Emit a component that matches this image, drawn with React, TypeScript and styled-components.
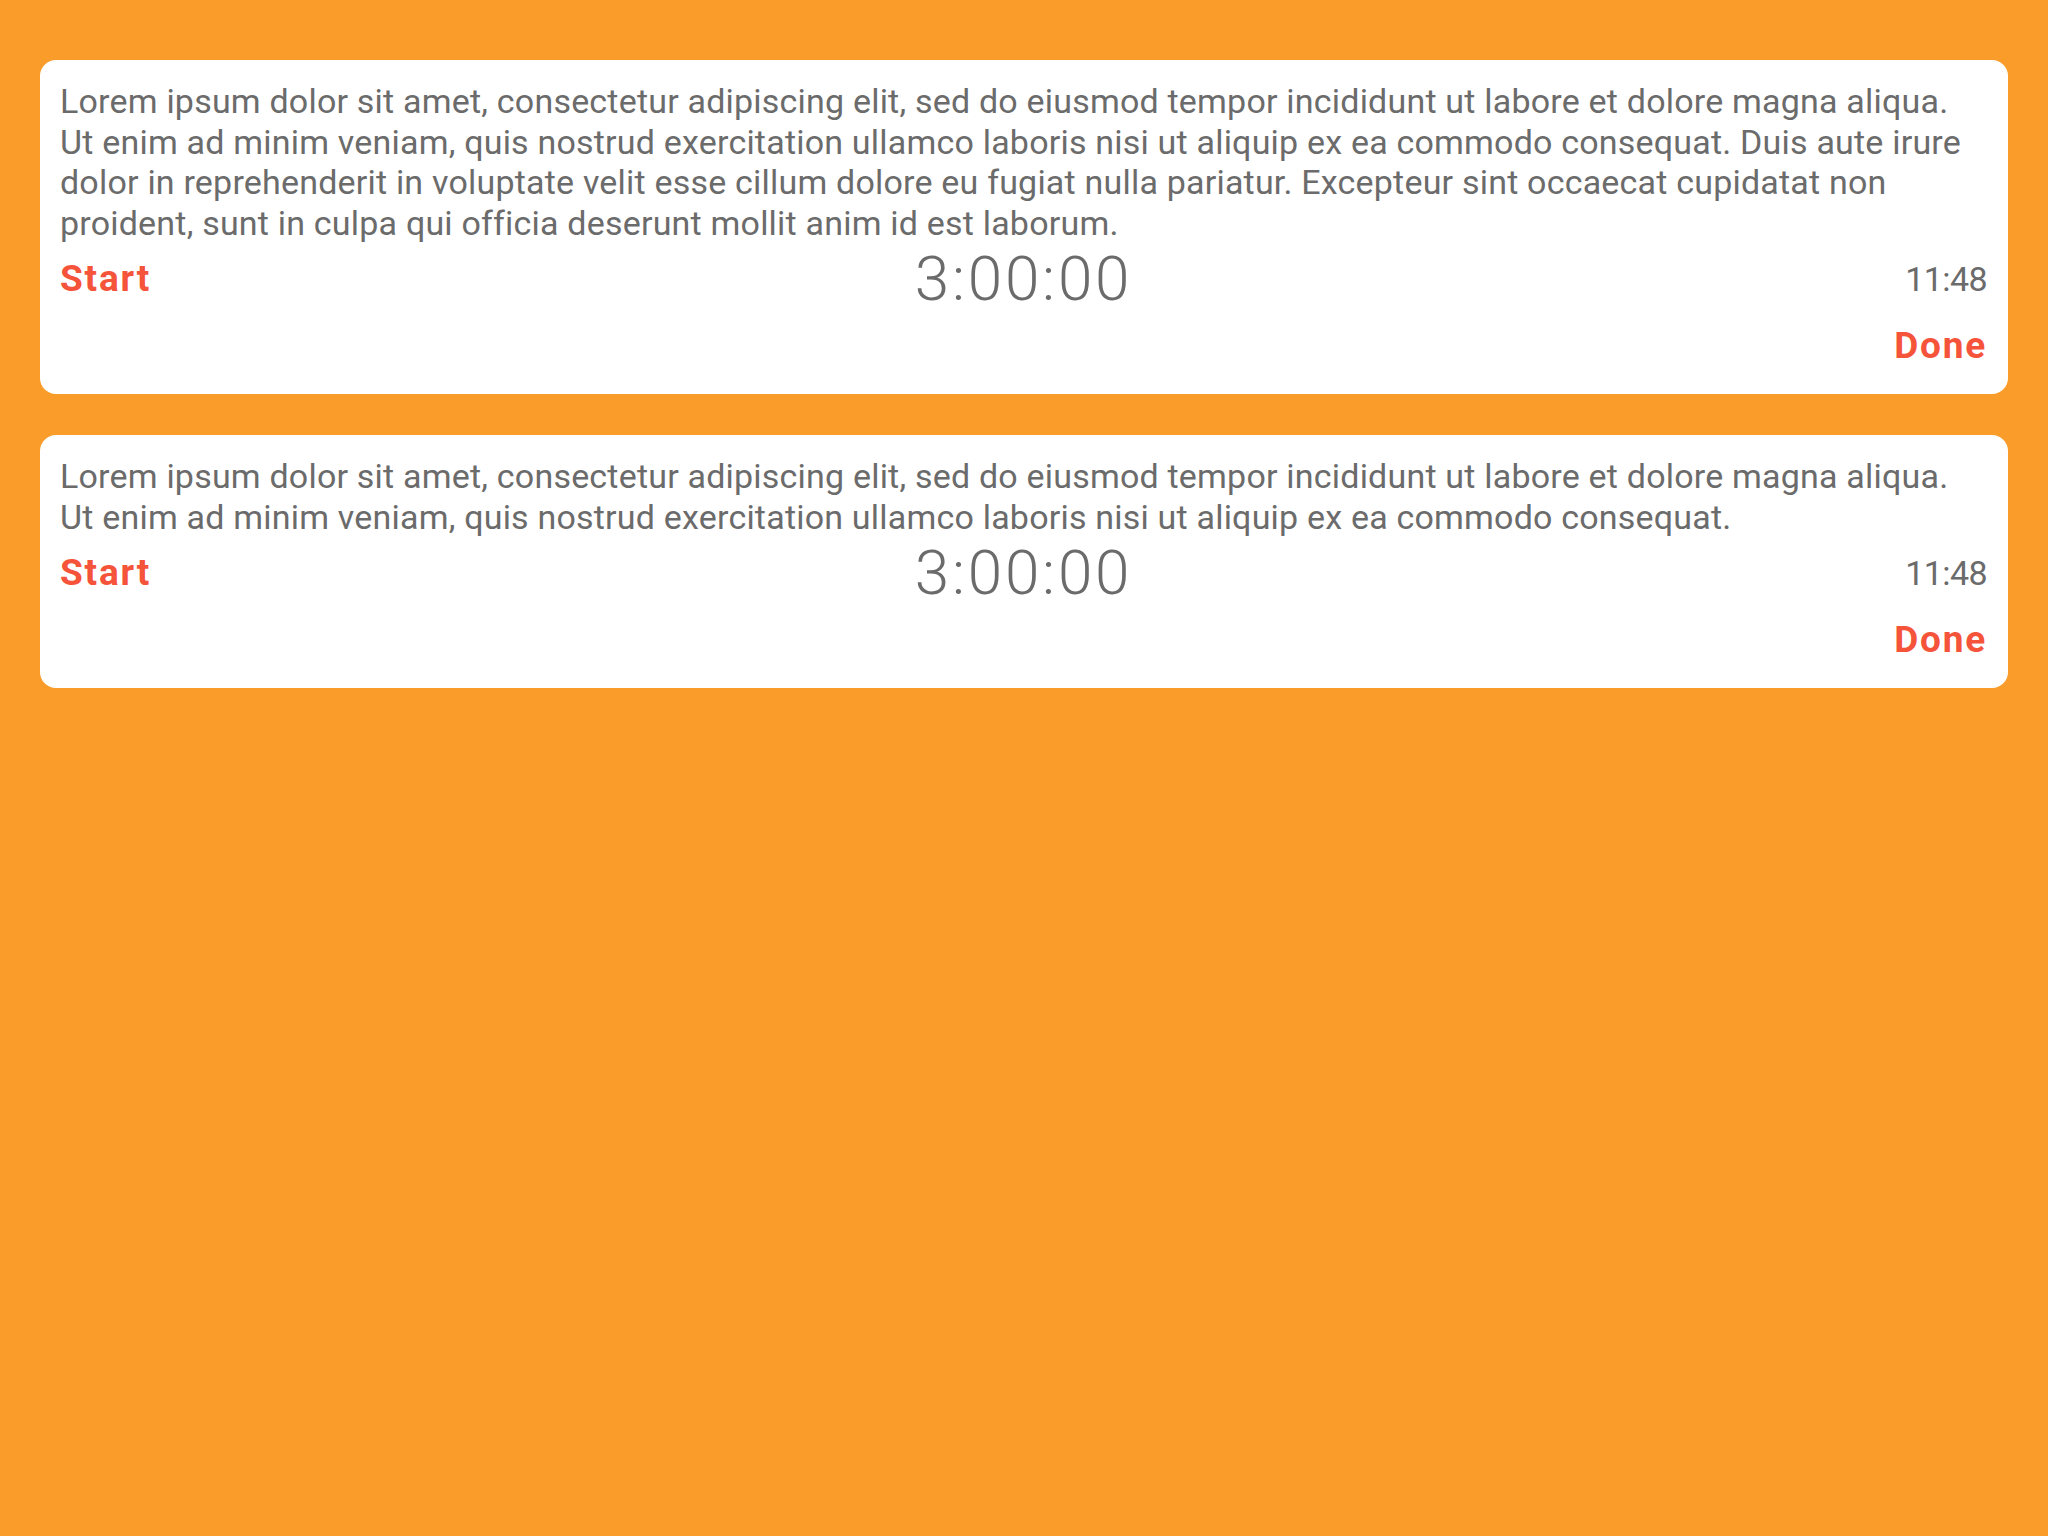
import React from "react";
import styled, { createGlobalStyle } from "styled-components";

const Global = createGlobalStyle`
  html, body {
    margin: 0;
    padding: 0;
    background: #FA9C2A;
  }
  body {
    font-family: "Roboto", "Liberation Sans", sans-serif;
  }
`;

const Page = styled.div`
  min-height: 1536px;
  box-sizing: border-box;
  padding: 60px 40px;
  display: flex;
  flex-direction: column;
  gap: 41px;
  background: #FA9C2A;
`;

const Card = styled.div`
  background: #ffffff;
  border-radius: 16px;
  padding: 21px 21px 26px 20px;
  display: flex;
  flex-direction: column;
`;

const Body = styled.p`
  margin: 0;
  font-size: 34px;
  line-height: 40.5px;
  letter-spacing: 0.2px;
  color: #6B6B6B;
  padding-right: 18px;
`;

const Row = styled.div`
  display: grid;
  grid-template-columns: 1fr auto 1fr;
  align-items: center;
  height: 72px;
`;

const Action = styled.span<{ $align?: "left" | "right" }>`
  font-size: 37px;
  font-weight: 700;
  letter-spacing: 1.8px;
  color: #F5543A;
  justify-self: ${(p) => (p.$align === "right" ? "end" : "start")};
  line-height: 44px;
`;

const Timer = styled.span`
  font-size: 62px;
  font-weight: 300;
  letter-spacing: 2.8px;
  color: #6B6B6B;
  line-height: 72px;
`;

const Clock = styled.span`
  justify-self: end;
  font-size: 34px;
  letter-spacing: -0.6px;
  color: #6B6B6B;
`;

const Footer = styled.div`
  display: flex;
  justify-content: flex-end;
  margin-top: 9px;
`;

const items = [
  "Lorem ipsum dolor sit amet, consectetur adipiscing elit, sed do eiusmod tempor incididunt ut labore et dolore magna aliqua. Ut enim ad minim veniam, quis nostrud exercitation ullamco laboris nisi ut aliquip ex ea commodo consequat. Duis aute irure dolor in reprehenderit in voluptate velit esse cillum dolore eu fugiat nulla pariatur. Excepteur sint occaecat cupidatat non proident, sunt in culpa qui officia deserunt mollit anim id est laborum.",
  "Lorem ipsum dolor sit amet, consectetur adipiscing elit, sed do eiusmod tempor incididunt ut labore et dolore magna aliqua. Ut enim ad minim veniam, quis nostrud exercitation ullamco laboris nisi ut aliquip ex ea commodo consequat.",
];

export default function App() {
  return (
    <>
      <Global />
      <Page>
        {items.map((t, i) => (
          <Card key={i}>
            <Body>{t}</Body>
            <Row>
              <Action>Start</Action>
              <Timer>3:00:00</Timer>
              <Clock>11:48</Clock>
            </Row>
            <Footer>
              <Action $align="right">Done</Action>
            </Footer>
          </Card>
        ))}
      </Page>
    </>
  );
}
